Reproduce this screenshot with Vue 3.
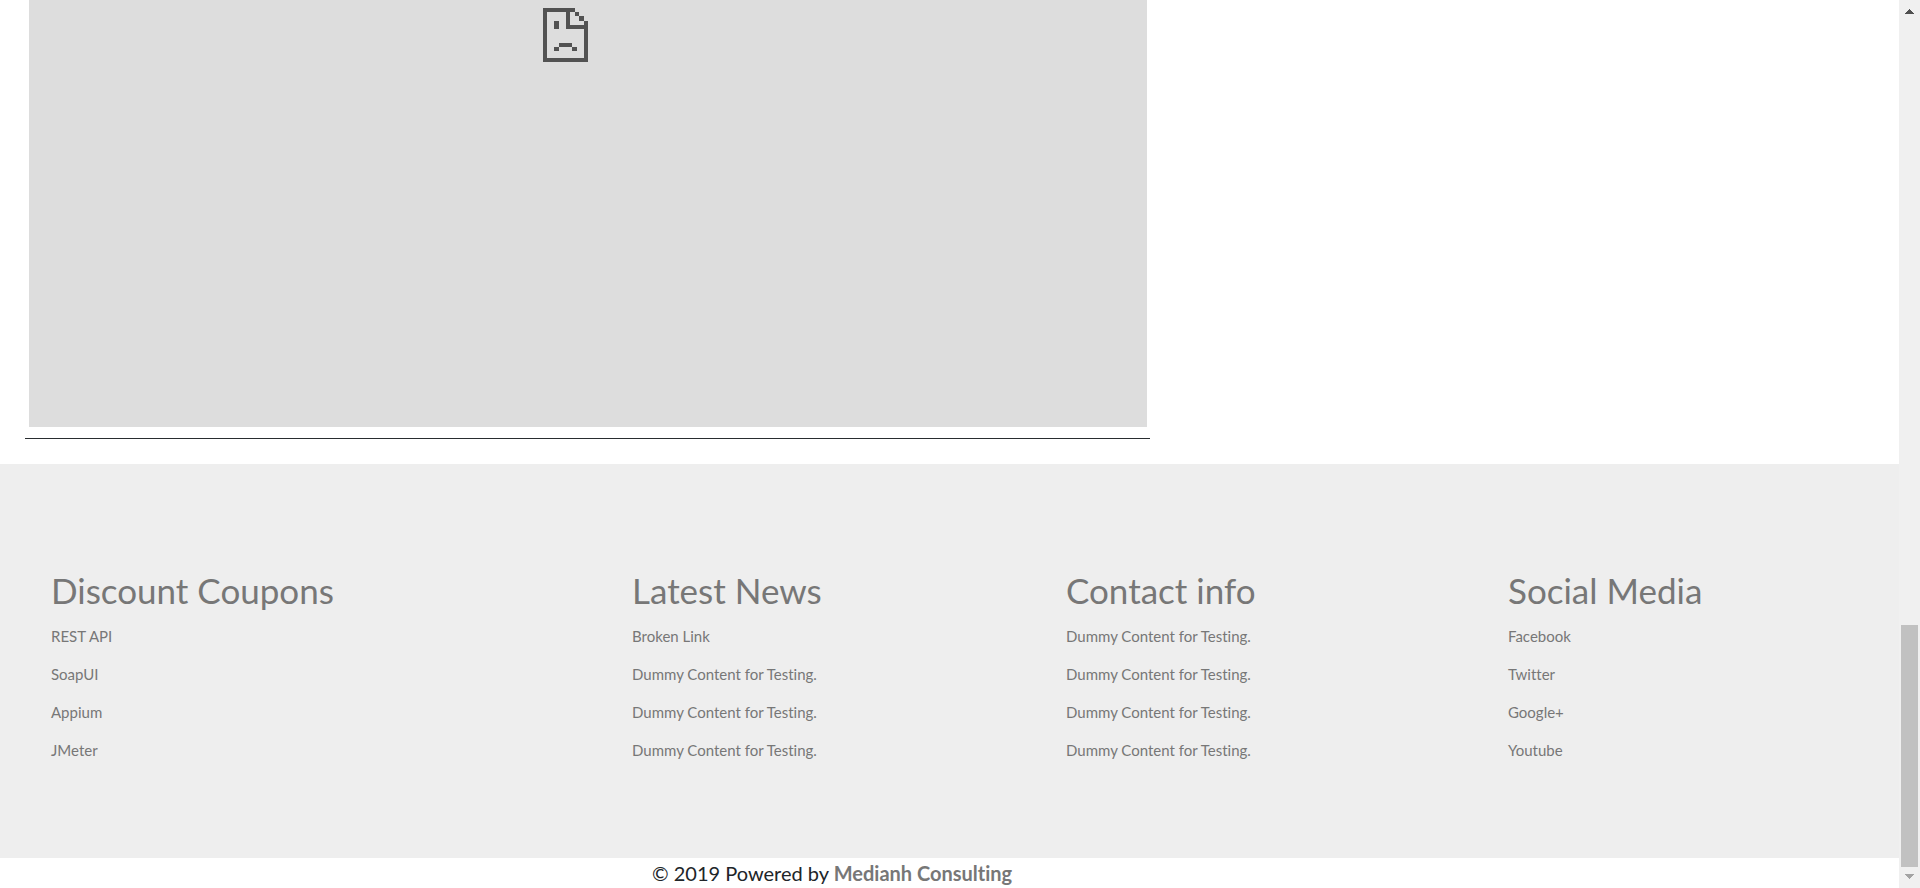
<script setup>
const columns = [
  { title: 'Discount Coupons', items: ['REST API', 'SoapUI', 'Appium', 'JMeter'] },
  {
    title: 'Latest News',
    items: ['Broken Link', 'Dummy Content for Testing.', 'Dummy Content for Testing.', 'Dummy Content for Testing.'],
  },
  {
    title: 'Contact info',
    items: ['Dummy Content for Testing.', 'Dummy Content for Testing.', 'Dummy Content for Testing.', 'Dummy Content for Testing.'],
  },
  { title: 'Social Media', items: ['Facebook', 'Twitter', 'Google+', 'Youtube'] },
]
</script>

<template>
  <div class="shell">
    <div class="page">
      <main class="content">
        <div class="frame">
          <svg class="sad" viewBox="0 0 45 54" width="45" height="54" role="img" aria-label="Page failed to load">
            <path
              fill="#525252"
              d="M0 0H32V4H36V8H41V13H45V54H0ZM4 4V50H41V21H23V4ZM27 4V17H41V13H36V8H32V4ZM11 13H16V21H11ZM16 35H29V39H16ZM11 39H16V43H11ZM29 39H34V43H29Z"
              fill-rule="evenodd"
            />
          </svg>
        </div>
      </main>
      <footer>
        <div class="columns">
          <section v-for="col in columns" :key="col.title">
            <h3>{{ col.title }}</h3>
            <ul>
              <li v-for="(item, i) in col.items" :key="i"><a href="#">{{ item }}</a></li>
            </ul>
          </section>
        </div>
        <p class="credit">© 2019 Powered by <a href="#">Medianh Consulting</a></p>
      </footer>
    </div>
    <div class="scrollbar" aria-hidden="true">
      <svg viewBox="0 0 9 5" width="9" height="5" shape-rendering="crispEdges"><path fill="#505050" d="M4 0h1v1h1v1h1v1h1v1h1v1H0V4h1V3h1V2h1V1h1z" /></svg>
      <div class="track"><div class="thumb"></div></div>
      <svg viewBox="0 0 9 5" width="9" height="5" shape-rendering="crispEdges"><path fill="#a3a3a3" d="M0 0h9v1H8v1H7v1H6v1H5v1H4V4H3V3H2V2H1V1H0z" /></svg>
    </div>
  </div>
</template>

<style>
body {
  margin: 0;
  background: #fff;
}
</style>

<style scoped>
.shell {
  display: flex;
  min-height: 100vh;
  font-family: "Trebuchet MS", Lato, sans-serif;
  font-variant-ligatures: none;
  color: #212529;
}
.page {
  flex: 1;
  min-width: 0;
}
.content {
  width: 59.25%;
  box-sizing: border-box;
  margin: 0 0 25px 25px;
  padding: 0 3px 11px 4px;
  border-bottom: 1px solid #292d30;
}
.frame {
  display: flex;
  justify-content: center;
  box-sizing: border-box;
  height: 427px;
  padding: 8px 45px 0 0;
  background: #ddd;
}
.columns {
  display: grid;
  grid-template-columns: 581fr 434fr 442fr 391fr;
  padding: 105px 0 89px 51px;
  background: #eee;
}
h3 {
  margin: 0 0 6px;
  font-size: 35px;
  font-weight: 400;
  line-height: 42px;
  color: #777;
}
ul {
  margin: 0;
  padding: 0;
  list-style: none;
}
li {
  font-size: 15px;
  line-height: 38px;
}
a {
  color: #777;
  text-decoration: none;
}
.credit {
  margin: 0;
  padding-left: 652px;
  font-size: 20px;
  line-height: 30px;
}
.credit a {
  font-weight: 700;
}
.scrollbar {
  display: flex;
  flex: 0 0 21px;
  flex-direction: column;
  align-items: center;
  box-sizing: border-box;
  padding: 9px 0;
  background: #f0f0f0;
}
.scrollbar svg {
  flex: none;
}
.track {
  display: flex;
  flex: 1;
  flex-direction: column;
  justify-content: flex-end;
  padding-bottom: 7px;
}
.thumb {
  width: 17px;
  height: 242px;
  background: #c1c1c1;
}
</style>
